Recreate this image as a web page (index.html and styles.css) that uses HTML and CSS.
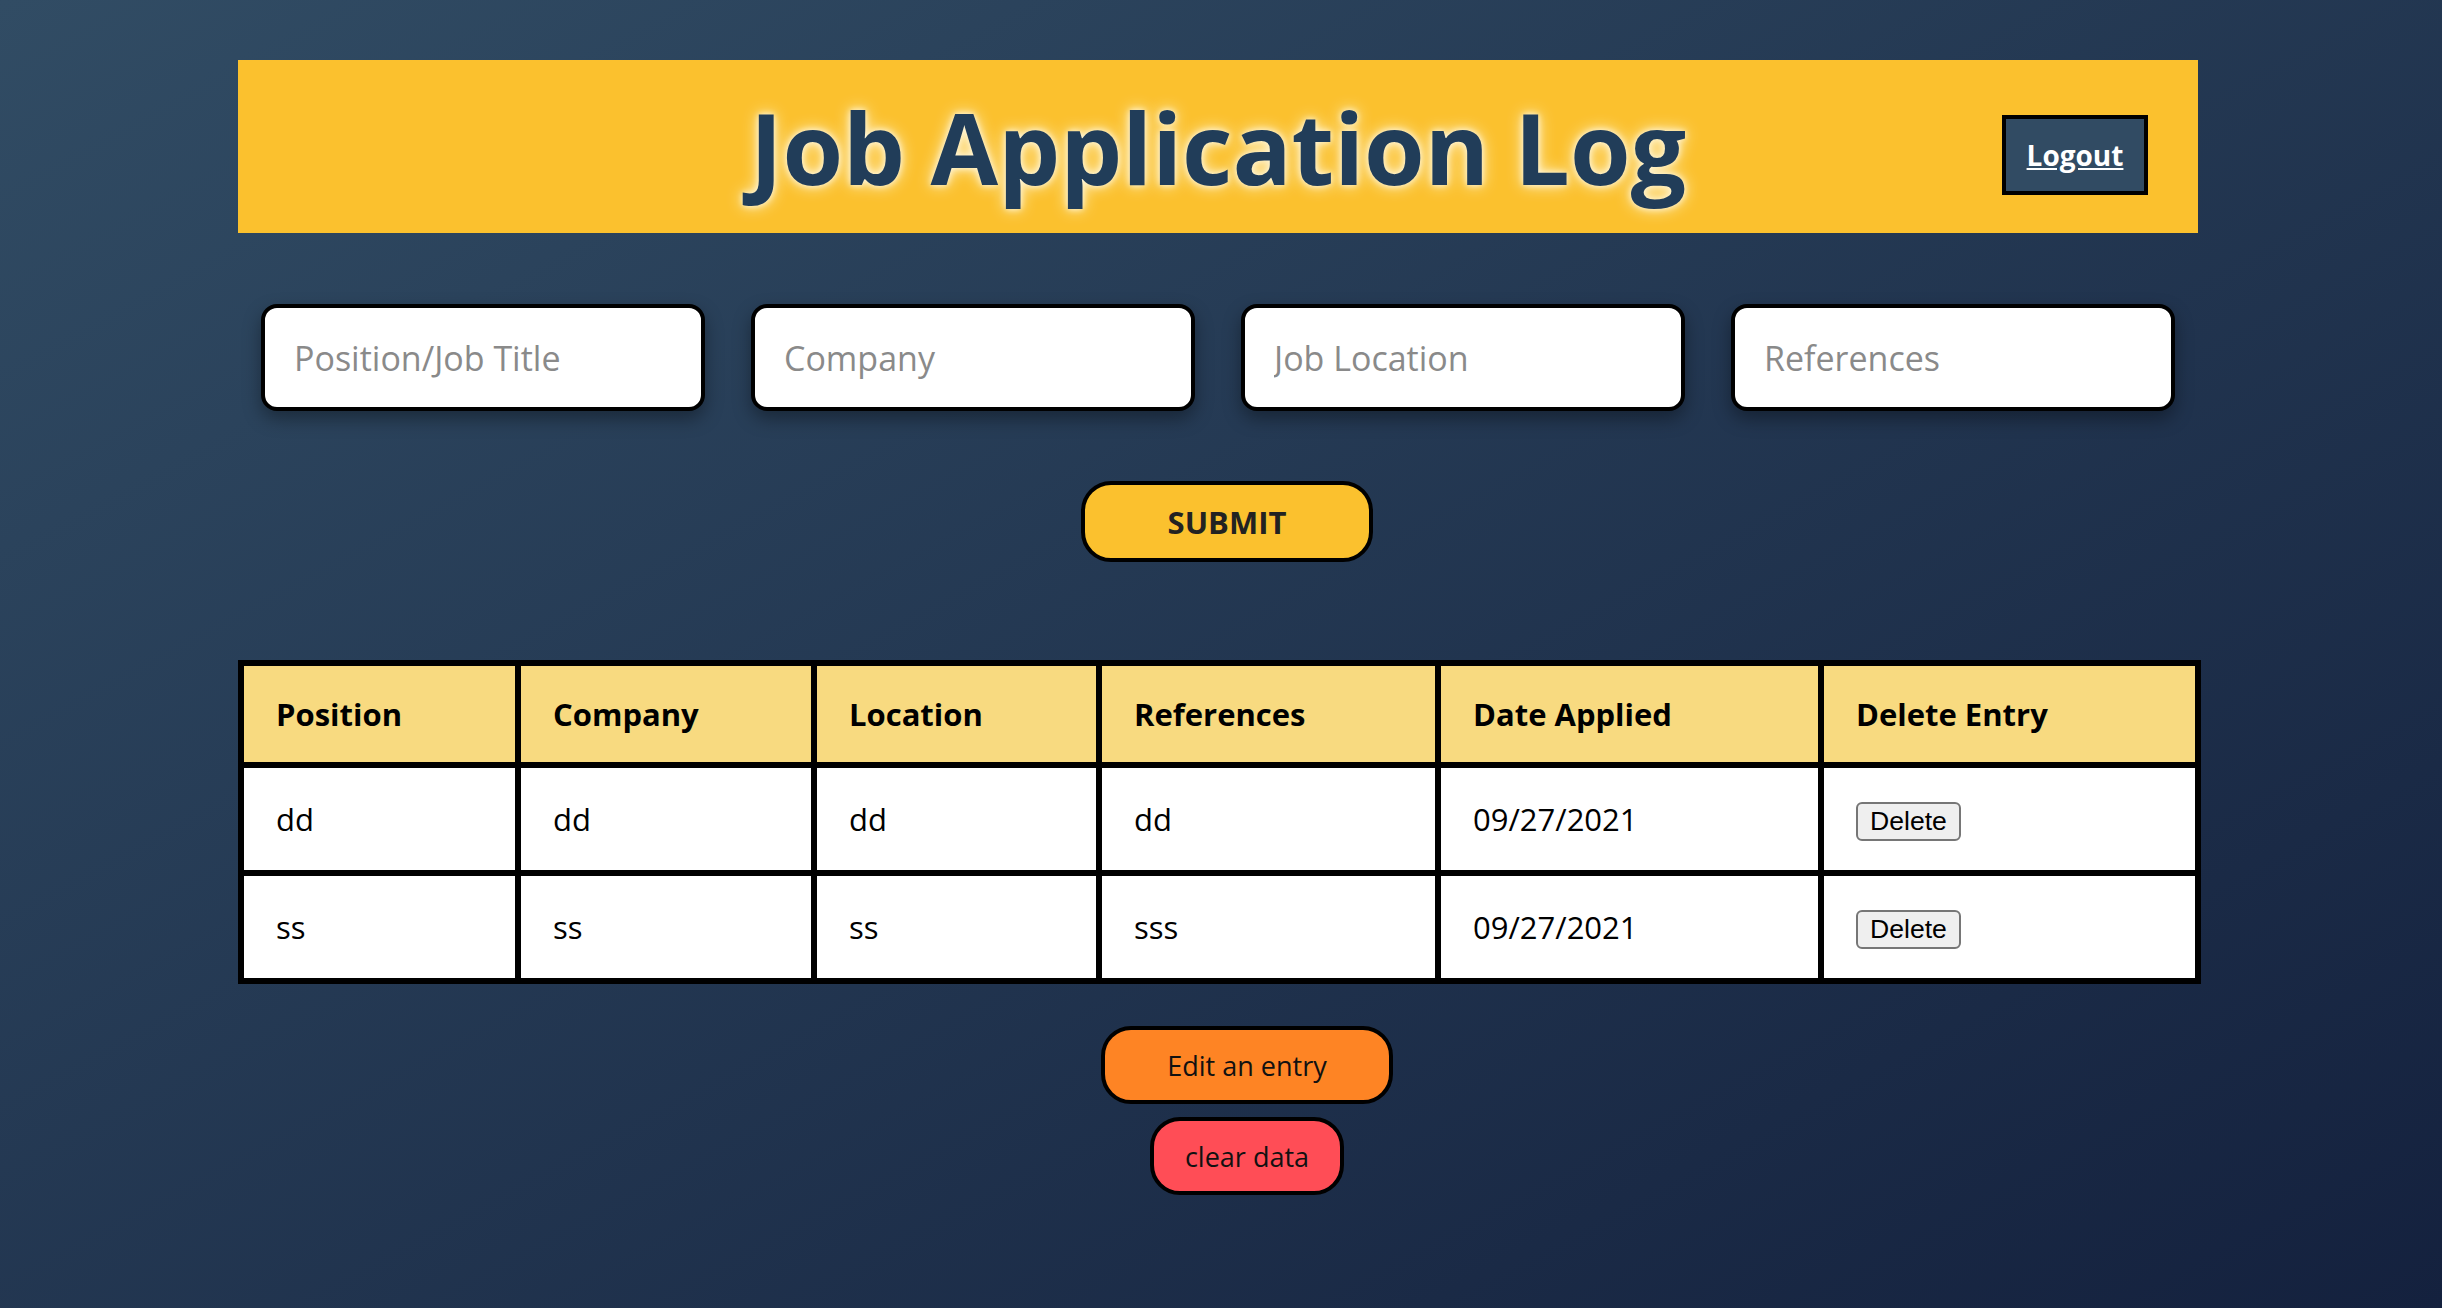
FILE: index.html
```html
<!DOCTYPE html>
<html lang="en">
<head>
  <meta charset="UTF-8">
  <meta name="viewport" content="width=device-width, initial-scale=1.0">
  <title>Job Application Log</title>
  <link rel="stylesheet" href="styles.css">
</head>
<body>
  <div class="page">
    <header class="header">
      <h1 class="title">Job Application Log</h1>
      <a class="logout" href="#">Logout</a>
    </header>

    <form id="job-form" class="job-form">
      <div class="inputs">
        <input type="text" id="position" placeholder="Position/Job Title">
        <input type="text" id="company" placeholder="Company">
        <input type="text" id="location" placeholder="Job Location">
        <input type="text" id="references" placeholder="References">
      </div>
      <button type="submit" class="submit">SUBMIT</button>
    </form>

    <table class="log">
      <colgroup>
        <col class="c1"><col class="c2"><col class="c3"><col class="c4"><col class="c5"><col class="c6">
      </colgroup>
      <thead>
        <tr>
          <th>Position</th>
          <th>Company</th>
          <th>Location</th>
          <th>References</th>
          <th>Date Applied</th>
          <th>Delete Entry</th>
        </tr>
      </thead>
      <tbody id="log-body">
        <tr>
          <td>dd</td><td>dd</td><td>dd</td><td>dd</td><td>09/27/2021</td>
          <td><button class="delete">Delete</button></td>
        </tr>
        <tr>
          <td>ss</td><td>ss</td><td>ss</td><td>sss</td><td>09/27/2021</td>
          <td><button class="delete">Delete</button></td>
        </tr>
      </tbody>
    </table>

    <div class="actions">
      <button class="edit">Edit an entry</button>
      <button class="clear">clear data</button>
    </div>
  </div>
</body>
</html>
```

FILE: styles.css
```css
body { margin: 0; min-height: 1308px; background: linear-gradient(to bottom right, #314c64, #14213e); font-family: "Open Sans", Arial, sans-serif; }
.page { width: 1960px; margin-left: 238px; padding-top: 60px; }

.header { display: grid; grid-template-columns: 1fr auto 1fr; align-items: center; height: 173px; background: #fbc12e; }
.title { grid-column: 2; margin: 0; font-size: 98px; font-weight: 700; color: #213d59; text-shadow: 0 0 16px #fff6d8, 0 0 6px #fffbe8; }
.logout { grid-column: 3; justify-self: end; margin: 16px 50px 0 0; width: 138px; height: 72px; display: flex; align-items: center; justify-content: center; background: #314b63; border: 4px solid #000; color: #fff; font-size: 28px; font-weight: 700; }

.job-form { display: flex; flex-direction: column; align-items: center; }
.inputs { display: flex; justify-content: space-around; width: 100%; margin-top: 71px; }
.inputs input { width: 444px; height: 107px; box-sizing: border-box; padding: 0 29px; border: 4px solid #000; border-radius: 16px; background: #fff; font-family: inherit; font-size: 34px; box-shadow: 0 8px 18px rgba(0,0,0,0.35); outline: none; }
.inputs input::placeholder { color: #8a8a8a; }
.submit { margin: 70px 0 0 18px; width: 292px; height: 81px; background: #fbc12e; border: 4px solid #000; border-radius: 30px; font-family: inherit; font-size: 31px; font-weight: 700; color: #222; cursor: pointer; }

.log { width: 1957px; margin-top: 98px; border-collapse: collapse; table-layout: fixed; }
.c1 { width: 277px; } .c2 { width: 296px; } .c3 { width: 285px; } .c4 { width: 339px; } .c5 { width: 383px; } .c6 { width: 377px; }
.log th, .log td { border: 6px solid #000; padding: 0 0 0 32px; text-align: left; font-size: 31px; color: #000; }
.log th { height: 96px; background: #f8da80; font-weight: 700; }
.log td { height: 102px; background: #fff; font-weight: 400; }
.delete { font-family: "Liberation Sans", Arial, sans-serif; font-size: 26.6px; padding: 2px 12px; background: #efefef; border: 2px solid #767676; border-radius: 6px; color: #000; }

.actions { display: flex; flex-direction: column; align-items: center; gap: 13px; margin-top: 42px; }
.actions button { height: 78px; border: 4px solid #000; border-radius: 30px; font-family: inherit; font-size: 27px; color: #111; cursor: pointer; margin-left: 58px; }
.edit { width: 292px; background: #fe8424; }
.clear { width: 194px; background: #ff4d56; }
```
